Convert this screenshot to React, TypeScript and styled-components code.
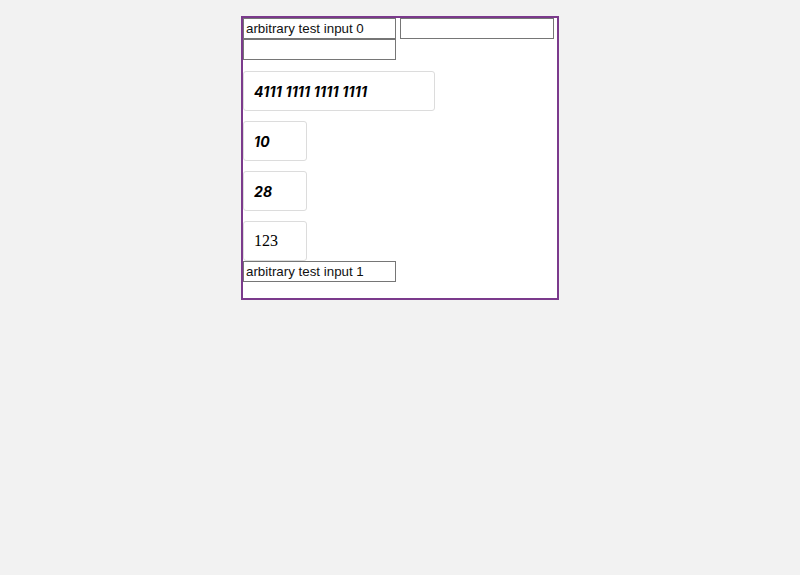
import styled, { createGlobalStyle } from "styled-components";

const Global = createGlobalStyle`
  html, body {
    margin: 0;
    background: #f2f2f2;
  }
`;

const Page = styled.div`
  display: flex;
  justify-content: center;
  padding-top: 16px;
`;

const Frame = styled.form`
  width: 314px;
  border: 2px solid #7b3a8c;
  background: #fff;
  padding-bottom: 16px;
  font-family: "Liberation Sans", Arial, sans-serif;
`;

const Row = styled.div<{ $h?: number }>`
  line-height: 0;
  height: ${(p) => p.$h ?? 21}px;
`;

const TextInput = styled.input`
  box-sizing: border-box;
  width: 153px;
  height: 21px;
  margin: 0;
  padding: 1px 2px;
  border: 1px solid #767676;
  font-family: "Liberation Sans", Arial, sans-serif;
  font-size: 13.33px;
  color: #111;
  vertical-align: top;
  outline: none;
  &.wide {
    width: 154px;
    margin-left: 4px;
  }
`;

const Field = styled.div<{ $w: number; $plain?: boolean }>`
  box-sizing: border-box;
  width: ${(p) => p.$w}px;
  height: 40px;
  margin-top: 10px;
  border: 1px solid #dcdcdc;
  border-radius: 3px;
  padding: 0 10px;
  display: flex;
  align-items: center;
  color: #000;
  font-family: ${(p) =>
    p.$plain ? '"Liberation Serif", "Times New Roman", serif' : 'Inter, "Open Sans", sans-serif'};
  font-size: ${(p) => (p.$plain ? "16px" : "14px")};
  font-weight: ${(p) => (p.$plain ? 400 : 700)};
  font-style: ${(p) => (p.$plain ? "normal" : "italic")};
  letter-spacing: ${(p) => (p.$plain ? "0" : "0.2px")};
`;

export default function App() {
  return (
    <>
      <Global />
      <Page>
        <Frame onSubmit={(e) => e.preventDefault()}>
          <Row>
            <TextInput defaultValue="arbitrary test input 0" />
            <TextInput className="wide" />
          </Row>
          <Row $h={22}>
            <TextInput />
          </Row>
          <Field $w={192}>4111 1111 1111 1111</Field>
          <Field $w={64}>10</Field>
          <Field $w={64}>28</Field>
          <Field $w={64} $plain>
            123
          </Field>
          <Row>
            <TextInput defaultValue="arbitrary test input 1" />
          </Row>
        </Frame>
      </Page>
    </>
  );
}
